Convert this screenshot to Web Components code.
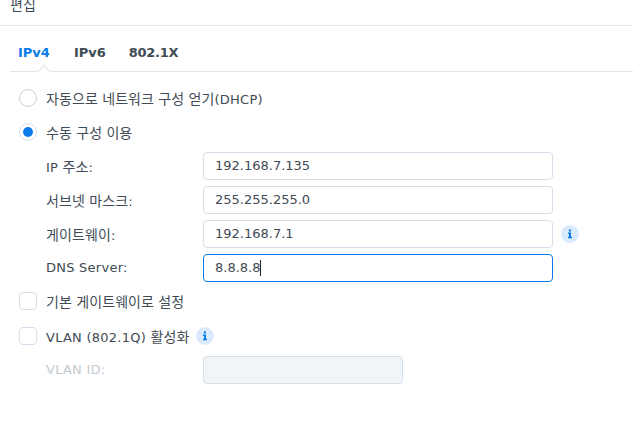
<!DOCTYPE html>
<html>
<head>
<meta charset="utf-8">
<style>
  html, body { margin: 0; background: #fff; }
  body {
    width: 633px;
    height: 440px;
    overflow: hidden;
    font-family: 'DejaVu Sans', 'Noto Sans CJK KR', sans-serif;
    font-size: 13px;
    color: #414b55;
  }
</style>
</head>
<body>
<edit-dialog>
  <ko-t slot="title">편집</ko-t>
  <tab-bar></tab-bar>
  <opt-row type="radio" gap="16"><ko-t>자동으로 네트워크 구성 얻기</ko-t>(DHCP)</opt-row>
  <opt-row type="radio" checked gap="14"><ko-t>수동 구성 이용</ko-t></opt-row>
  <field-row gap="10" value="192.168.7.135">IP <ko-t>주소</ko-t>:</field-row>
  <field-row value="255.255.255.0"><ko-t>서브넷 마스크</ko-t>:</field-row>
  <field-row value="192.168.7.1" info><ko-t>게이트웨이</ko-t>:</field-row>
  <field-row value="8.8.8.8" focused>DNS Server:</field-row>
  <opt-row type="check" gap="9"><ko-t>기본 게이트웨이로 설정</ko-t></opt-row>
  <opt-row type="check" gap="15" info>VLAN (802.1Q) <ko-t>활성화</ko-t></opt-row>
  <field-row disabled gap="10">VLAN ID:</field-row>
</edit-dialog>

<script>
const INFO_ICON = `
  <svg width="18" height="18" viewBox="0 0 18 18">
    <circle cx="9" cy="9" r="9" fill="#d9eafd"/>
    <path d="M7.8 4.6h2.2v2h-2.2z M7 7.6h3v4.2h1v1.4H7v-1.4h1v-2.8H7z" fill="#0a7bea"/>
  </svg>`;

// Korean runs are set a little larger than the latin text around them
class KoT extends HTMLElement {
  constructor() {
    super();
    this.attachShadow({ mode: 'open' });
  }

  connectedCallback() {
    // no whitespace around the slot, it would show up as a space in the inline host
    this.shadowRoot.innerHTML = `<style>
        :host {
          display: inline;
          font-family: 'Noto Sans CJK KR', sans-serif;
          font-size: 14px;
          letter-spacing: 0.1px;
          word-spacing: 1px;
        }
      </style><slot></slot>`;
  }
}

class EditDialog extends HTMLElement {
  constructor() {
    super();
    this.attachShadow({ mode: 'open' });
  }

  connectedCallback() {
    this.shadowRoot.innerHTML = `
      <style>
        :host { display: block; }
        .title {
          height: 26px;
          box-sizing: border-box;
          padding-left: 10px;
          border-bottom: 1px solid #e3e8ee;
          overflow: hidden;
        }
        .title-inner { display: block; margin-top: -6px; line-height: 20px; }
        .body { padding-left: 19px; }
      </style>
      <div class="title"><span class="title-inner"><slot name="title"></slot></span></div>
      <div class="body"><slot></slot></div>
    `;
  }
}

class TabBar extends HTMLElement {
  constructor() {
    super();
    this.attachShadow({ mode: 'open' });
  }

  connectedCallback() {
    this.shadowRoot.innerHTML = `
      <style>
        :host {
          display: flex;
          position: relative;
          box-sizing: border-box;
          gap: 24px;
          height: 46px;
          padding: 8px 0 0 8px;
          margin-left: -9px;
          align-items: center;
          border-bottom: 1px solid #dfe5ec;
          font-weight: 700;
        }
        .active { color: #0a7bea; }
        .last { letter-spacing: -0.3px; margin-left: -1px; }
        .notch {
          position: absolute;
          left: 29px;
          bottom: -1px;
          width: 10px;
          height: 10px;
          background: #fff;
          border-left: 1px solid #dfe5ec;
          border-top: 1px solid #dfe5ec;
          transform: translateY(5px) rotate(45deg);
          box-sizing: border-box;
        }
      </style>
      <span class="active">IPv4</span>
      <span>IPv6</span>
      <span class="last">802.1X</span>
      <span class="notch"></span>
    `;
  }
}

class OptRow extends HTMLElement {
  constructor() {
    super();
    this.attachShadow({ mode: 'open' });
  }

  connectedCallback() {
    const isRadio = this.getAttribute('type') === 'radio';
    const checked = this.hasAttribute('checked');
    const gap = this.getAttribute('gap') || '17';
    const border = checked ? '#d5e4f5' : isRadio ? '#c8d0d9' : '#d5dfe9';
    this.shadowRoot.innerHTML = `
      <style>
        :host {
          display: flex;
          align-items: center;
          height: 20px;
          margin-top: ${gap}px;
          gap: 9px;
          letter-spacing: 0.25px;
        }
        .box {
          width: 18px;
          height: 18px;
          box-sizing: border-box;
          border: 1px solid ${border};
          border-radius: ${isRadio ? '50%' : '4px'};
          flex: none;
          display: flex;
          align-items: center;
          justify-content: center;
        }
        .dot {
          width: 10px;
          height: 10px;
          border-radius: 50%;
          background: #0a7bea;
        }
        .info { display: flex; margin-left: -2px; }
      </style>
      <span class="box">${checked ? '<span class="dot"></span>' : ''}</span>
      <span><slot></slot></span>
      ${this.hasAttribute('info') ? `<span class="info">${INFO_ICON}</span>` : ''}
    `;
  }
}

class FieldRow extends HTMLElement {
  constructor() {
    super();
    this.attachShadow({ mode: 'open' });
  }

  connectedCallback() {
    const value = this.getAttribute('value') || '';
    const focused = this.hasAttribute('focused');
    const disabled = this.hasAttribute('disabled');
    const gap = this.getAttribute('gap') || '6';
    this.shadowRoot.innerHTML = `
      <style>
        :host {
          display: flex;
          align-items: center;
          margin-top: ${gap}px;
          padding-left: 27px;
        }
        .label {
          width: 157px;
          flex: none;
          padding-bottom: 1px;
          letter-spacing: 0.25px;
          color: ${disabled ? '#c3cad2' : '#414b55'};
        }
        .input {
          width: ${disabled ? '200px' : '350px'};
          height: 28px;
          box-sizing: border-box;
          border: 1px solid ${focused ? '#0a7bea' : '#d5dfe9'};
          border-radius: 4px;
          background: ${disabled ? '#f2f5f8' : '#fff'};
          padding: 0 0 1px 11px;
          display: flex;
          align-items: center;
          flex: none;
        }
        .caret { width: 1px; height: 16px; background: #222; }
        .info { display: flex; margin-left: 8px; }
      </style>
      <span class="label"><slot></slot></span>
      <div class="input"><span>${value}</span>${focused ? '<span class="caret"></span>' : ''}</div>
      ${this.hasAttribute('info') ? `<span class="info">${INFO_ICON}</span>` : ''}
    `;
  }
}

customElements.define('ko-t', KoT);
customElements.define('edit-dialog', EditDialog);
customElements.define('tab-bar', TabBar);
customElements.define('opt-row', OptRow);
customElements.define('field-row', FieldRow);
</script>
</body>
</html>
